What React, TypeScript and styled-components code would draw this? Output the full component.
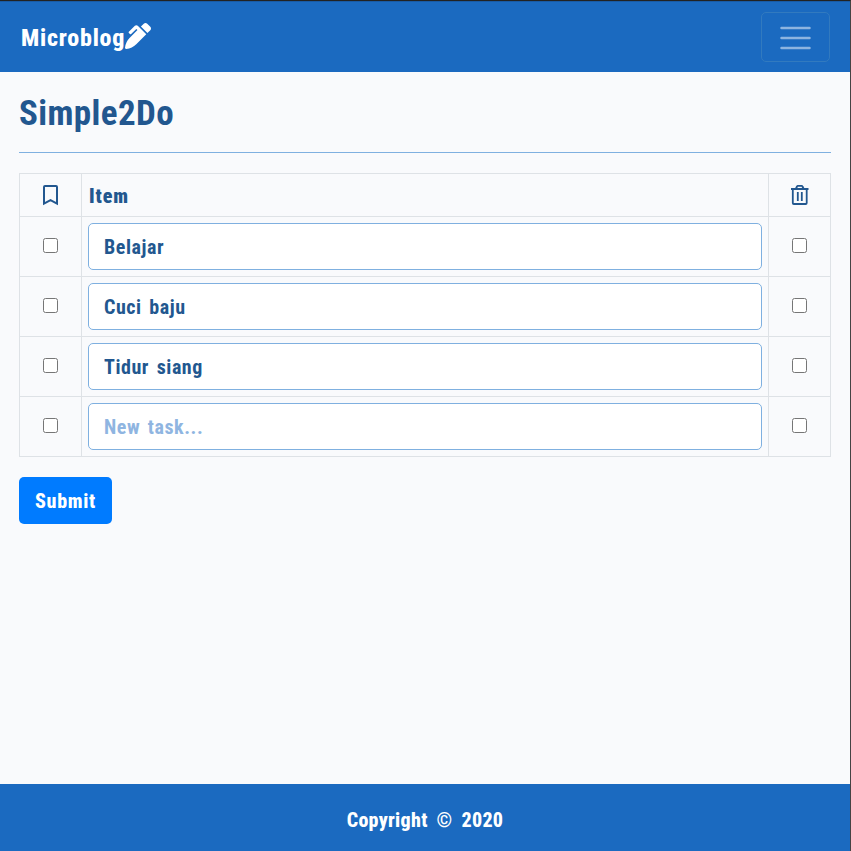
import React from "react";
import styled, { createGlobalStyle } from "styled-components";
import { FaPenAlt } from "react-icons/fa";

const Global = createGlobalStyle`
  *, *::before, *::after { box-sizing: border-box; }
  body { margin: 0; background: #f9fafc; color: #22578f; font: bold 20px/1.5 Roboto, sans-serif; font-stretch: 75%; }
`;

const Page = styled.div`
  min-height: 851px;
  display: flex;
  flex-direction: column;
  border-top: 1px solid #222;
  border-right: 1px solid #444;
`;
const Navbar = styled.header`
  height: 71px;
  flex: none;
  display: flex;
  align-items: center;
  justify-content: space-between;
  padding: 0 20px 0 21px;
  background: #1b6ac0;
  border-top: 1px solid #195ba5;
`;
const Brand = styled.a`
  display: flex;
  padding-top: 2px;
  color: #fff;
  font-size: 24px;
  font-weight: 800;
  line-height: 32px;
  letter-spacing: 0.8px;
`;
const Name = styled.span`
  width: 104px;
  white-space: nowrap;
`;
const Pen = styled(FaPenAlt)`
  width: 26px;
  height: 26px;
  margin-top: 1px;
`;
const Toggler = styled.button`
  width: 69px;
  height: 50px;
  display: grid;
  place-items: center;
  padding: 0;
  border: 1px solid #327abf;
  border-radius: 5px;
  background: transparent;
`;
const Main = styled.main`
  flex: 1;
  padding: 21px 19px 0;
`;
const Title = styled.h1`
  margin: 0;
  height: 59px;
  font-size: 35px;
  line-height: 42px;
  letter-spacing: 0.4px;
`;
const Rule = styled.hr`
  margin: 0 0 20px;
  border: 0;
  border-top: 1px solid #7fb0e0;
`;
const Table = styled.table`
  width: 812px;
  table-layout: fixed;
  border-collapse: collapse;
  margin-bottom: 20px;
`;
const Cell = styled.td<{ $center?: boolean; $head?: boolean }>`
  width: ${(p) => (p.$center ? "62px" : "auto")};
  height: ${(p) => (p.$head ? 43 : 60)}px;
  padding: ${(p) => (p.$head && !p.$center ? "2px 7px 0" : "0 6px")};
  border: 1px solid #dee2e6;
  text-align: ${(p) => (p.$center ? "center" : "left")};
  vertical-align: middle;
  font-weight: ${(p) => (p.$head ? 900 : 700)};
  letter-spacing: 0.9px;
  svg { display: block; margin: 0 auto; }
`;
const Check = styled.input`
  display: block;
  appearance: none;
  width: 15px;
  height: 15px;
  margin: -2px auto 0;
  border: 1px solid #767676;
  border-radius: 2.5px;
  background: #fff;
`;
const Field = styled.input`
  display: block;
  width: 674px;
  height: 47px;
  padding: 1px 15px 0;
  border: 1px solid #7fb0e0;
  border-radius: 5px;
  background: #fff;
  color: #22578f;
  font: inherit;
  letter-spacing: 0.55px;
  word-spacing: 2.5px;
  &::placeholder { color: #8fb5e1; opacity: 1; }
`;
const Submit = styled.button`
  width: 93px;
  height: 47px;
  padding: 1px 0 0;
  border: 0;
  border-radius: 5px;
  background: #007bff;
  color: #fff;
  font: inherit;
  font-weight: 800;
  letter-spacing: 0.7px;
`;
const Footer = styled.footer`
  height: 67px;
  flex: none;
  padding-top: 5px;
  display: grid;
  place-items: center;
  background: #1b6ac0;
  color: #fff;
  font-weight: 800;
  letter-spacing: 0.3px;
  word-spacing: 4px;
`;

const Bookmark = () => (
  <svg width="26" height="24" viewBox="0 0 26 24" fill="none" stroke="currentColor" strokeWidth="2">
    <path d="M6 20.6V4a1 1 0 0 1 1-1h11a1 1 0 0 1 1 1v16.6l-6.5-3.5z" />
  </svg>
);
const Trash = () => (
  <svg width="24" height="24" viewBox="0 0 24 24" fill="none" stroke="currentColor" strokeWidth="1.8">
    <path d="M3 6h17.5M8 5.5L9 3.5a1 1 0 0 1 1-.6h3.5a1 1 0 0 1 1 .6l1 2M4.8 6v14a1 1 0 0 0 1 1h11.9a1 1 0 0 0 1-1V6M9.8 9v9M13.8 9v9" />
  </svg>
);

const tasks = ["Belajar", "Cuci baju", "Tidur siang", ""];

export default function App() {
  return (
    <Page>
      <Global />
      <Navbar>
        <Brand><Name>Microblog</Name><Pen /></Brand>
        <Toggler aria-label="Toggle navigation">
          <svg width="37" height="37" viewBox="0 0 37 37" stroke="#8db4e0" strokeWidth="2.5" strokeLinecap="round">
            <path d="M4.5 9h28M4.5 19h28M4.5 29h28" />
          </svg>
        </Toggler>
      </Navbar>
      <Main>
        <Title>Simple2Do</Title>
        <Rule />
        <Table>
          <thead>
            <tr>
              <Cell as="th" $center $head><Bookmark /></Cell>
              <Cell as="th" $head>Item</Cell>
              <Cell as="th" $center $head><Trash /></Cell>
            </tr>
          </thead>
          <tbody>
            {tasks.map((task, i) => (
              <tr key={i}>
                <Cell $center><Check type="checkbox" /></Cell>
                <Cell><Field defaultValue={task} placeholder="New task..." /></Cell>
                <Cell $center><Check type="checkbox" /></Cell>
              </tr>
            ))}
          </tbody>
        </Table>
        <Submit>Submit</Submit>
      </Main>
      <Footer>Copyright © 2020</Footer>
    </Page>
  );
}
